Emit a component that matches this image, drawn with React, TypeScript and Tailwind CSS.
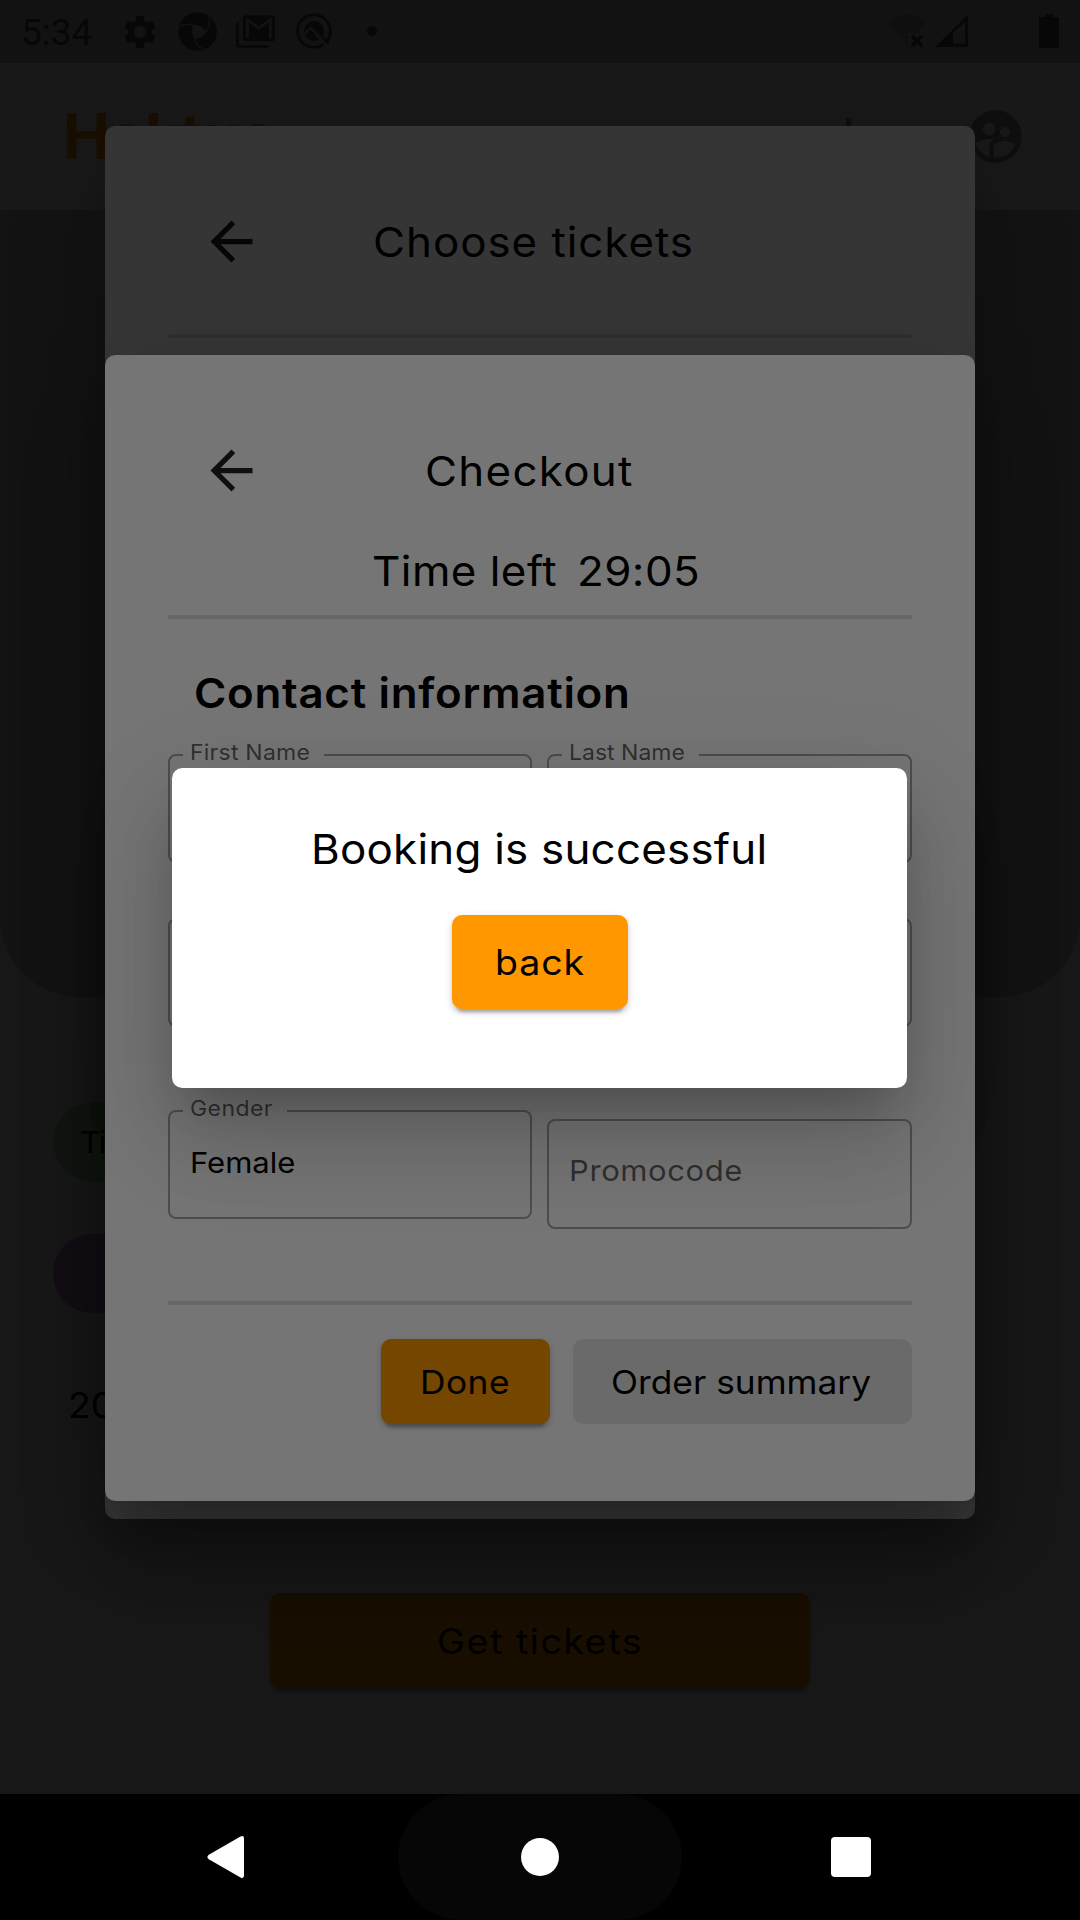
import type { ReactNode } from "react";
import { MdAdd, MdArrowBack, MdSettings, MdSupervisedUserCircle } from "react-icons/md";

const dialogShadow =
  "shadow-[0_29px_39px_-18px_rgba(0,0,0,0.19),0_58px_92px_2px_rgba(0,0,0,0.13),0_24px_100px_12px_rgba(0,0,0,0.09)]";
const buttonShadow =
  "shadow-[0_8px_3px_-5px_rgba(0,0,0,0.2),0_4px_5px_0_rgba(0,0,0,0.14),0_2px_10px_0_rgba(0,0,0,0.10)]";

/* Text drawn slightly wider than the base face. */
function Wide({ className = "", children }: { className?: string; children: ReactNode }) {
  return <span className={`inline-block origin-left scale-x-[1.07] whitespace-nowrap ${className}`}>{children}</span>;
}

function StatusBar() {
  return (
    <div className="flex h-[63px] items-start bg-[#c4c4c4] text-[#4c4c4c]">
      <span className="ml-[21px] mt-[14px] w-[99px] font-[Roboto] text-[37px] leading-[37px]">5:34</span>
      <MdSettings className="mt-[12px] size-[40px] shrink-0" />
      <svg className="ml-[18px] mt-[12px] size-[39px] shrink-0" viewBox="0 0 117 117">
        <circle cx="58.5" cy="58.5" r="58" fill="currentColor" />
        <g stroke="#c4c4c4" strokeWidth="4" fill="none">
          <path d="M0 48C14 36 30 35 45 40" />
          <path d="M90 2C98 22 94 44 85 59" />
          <path d="M48 82C54 98 66 108 82 114" />
        </g>
        <path d="M45 39C60 38 76 45 86 59C78 72 64 80 48 82C41 68 40 53 45 39Z" fill="#c4c4c4" />
      </svg>
      <svg className="ml-[19px] mt-[15px] h-[33px] w-[39px] shrink-0" viewBox="0 0 118 99">
        <path d="M4 22V86Q4 95 13 95H99" fill="none" stroke="currentColor" strokeWidth="8" />
        <rect x="21" y="0" width="97" height="79" rx="8" fill="currentColor" />
        <path d="M35 69V14L69 39L104 14V69" fill="none" stroke="#c4c4c4" strokeWidth="8" />
      </svg>
      <svg className="ml-[21px] mt-[13px] size-[36px] shrink-0" viewBox="0 0 108 108">
        <circle cx="54" cy="54" r="49" fill="none" stroke="currentColor" strokeWidth="9" />
        <circle cx="54" cy="54" r="30" fill="currentColor" />
        <path d="M58 62L92 98" fill="none" stroke="#c4c4c4" strokeWidth="8" />
        <path d="M45 39L98 92" fill="none" stroke="currentColor" strokeWidth="9" />
        <path d="M26 62L44 44L80 82" fill="none" stroke="#c4c4c4" strokeWidth="7" />
      </svg>
      <span className="ml-[35px] mt-[26px] size-[10px] rounded-full bg-[#4c4c4c]" />
      <svg className="ml-auto mt-[14px] h-[34px] w-[40px] shrink-0" viewBox="0 0 40 34">
        <path d="M0 9Q19.500 -9 39 9L30 19H21V33Z" fill="#a4a4a4" />
        <path d="M25 22L35 32M35 22L25 32" stroke="currentColor" strokeWidth="3.800" />
      </svg>
      <svg className="ml-[8px] mt-[14px] h-[34px] w-[34px] shrink-0" viewBox="0 0 34 34">
        <path d="M0 33L33 0.500V33ZM18 29.500H30V8L18 19Z" fill="currentColor" fillRule="evenodd" />
      </svg>
      <svg className="ml-[70px] mr-[21px] mt-[14px] h-[34px] w-[20px] shrink-0" viewBox="0 0 20 34">
        <path d="M6 0H14V3H18.500Q20 3 20 4.500V32Q20 34 18 34H2Q0 34 0 32V4.500Q0 3 1.500 3H6Z" fill="currentColor" />
      </svg>
    </div>
  );
}

function EventPage() {
  return (
    <div className="flex h-[1794px] flex-col bg-[#f8f8f8]">
      <StatusBar />
      <header className="flex h-[147px] items-start bg-white">
        <span className="ml-[63px] mt-[41px] text-[63px] font-bold leading-[64px] tracking-[-1px] text-[#ff9800]">Haktus</span>
        <MdAdd className="ml-auto mt-[42px] size-[63px] text-[#999]" />
        <MdSupervisedUserCircle className="ml-[84px] mr-[53px] mt-[42px] size-[63px] text-[#999]" />
      </header>
      <div className="h-[787px] shrink-0 rounded-b-[79px] bg-[#c8c8c8]" />
      <div className="ml-[53px] mt-[105px] flex h-[80px] w-[300px] shrink-0 items-center rounded-full bg-[#b0e0a8] pl-[27px] text-[30px]">
        <Wide className="tracking-[-2px]">Time</Wide>
      </div>
      <div className="ml-[53px] mt-[52px] h-[79px] w-[300px] shrink-0 rounded-full bg-[#c494d0]" />
      <div className="ml-[68px] mt-[72px] h-[40px] text-[35px] leading-[40px]">
        <Wide>2022</Wide>
      </div>
      <div
        className={`ml-[270px] mt-[168px] flex h-[95px] w-[540px] shrink-0 items-center rounded-[10px] bg-[#ff9800] pl-[167px] pt-[1px] text-[35px] ${buttonShadow}`}
      >
        <Wide className="tracking-[1.500px]">Get tickets</Wide>
      </div>
    </div>
  );
}

function Scrim() {
  return <div className="absolute inset-x-0 top-0 h-[1794px] bg-black/54" />;
}

function Divider({ className }: { className: string }) {
  return <div className={`shrink-0 bg-black/12 ${className}`} />;
}

function Field({ label, notch, tracking, children }: { label: string; notch: string; tracking: string; children?: ReactNode }) {
  return (
    <fieldset className="h-[120px] w-full min-w-0 rounded-[8px] border-2 border-black/34">
      <legend className={`ml-[13px] h-[24px] pl-[6.500px] text-[21.500px] leading-[24px] text-black/60 ${notch} ${tracking}`}>
        <span className="relative -top-[3px] inline-block origin-left scale-x-[1.07] whitespace-nowrap">{label}</span>
      </legend>
      {children}
    </fieldset>
  );
}

function TicketsDialog() {
  return (
    <div className={`absolute left-[105px] top-[126px] h-[1393px] w-[870px] rounded-[10.500px] bg-white px-[63px] pt-[84px] ${dialogShadow}`}>
      <div className="flex h-[63px] items-center">
        <MdArrowBack className="ml-[32px] size-[63px] text-black/87" />
        <h2 className="ml-[110px] pt-[2px] text-[41px]">
          <Wide className="tracking-[0.900px]">Choose tickets</Wide>
        </h2>
      </div>
      <Divider className="mt-[61px] h-[4px]" />
    </div>
  );
}

function CheckoutDialog() {
  return (
    <div className={`absolute left-[105px] top-[355px] flex h-[1146px] w-[870px] flex-col rounded-[10.500px] bg-white px-[63px] pt-[84px] ${dialogShadow}`}>
      <div className="flex h-[63px] shrink-0 items-center">
        <MdArrowBack className="ml-[32px] size-[63px] text-black/87" />
        <h2 className="ml-[162px] pt-[2px] text-[41px]">
          <Wide className="tracking-[1.200px]">Checkout</Wide>
        </h2>
      </div>
      <div className="mt-[45px] flex h-[50px] shrink-0 items-center pl-[204px] text-[41px]">
        <span className="w-[205px]">
          <Wide className="tracking-[0.460px]">Time left</Wide>
        </span>
        <Wide className="tracking-[0.400px]">29:05</Wide>
      </div>
      <Divider className="mt-[18px] h-[4px]" />
      <h3 className="mt-[49px] h-[50px] shrink-0 pl-[26px] text-[41px] font-[620] leading-[50px]">
        <Wide className="tracking-[0.670px]">Contact information</Wide>
      </h3>
      <div className="mt-[25px] grid shrink-0 grid-cols-[364px_365px] gap-[15px]">
        <Field label="First Name" notch="w-[141px]" tracking="tracking-[0.220px]" />
        <Field label="Last Name" notch="w-[137px]" tracking="tracking-normal" />
      </div>
      <div className="mt-[55px] grid shrink-0 grid-cols-[364px_365px] gap-[15px]">
        <div className="h-[109px] rounded-[8px] border-2 border-black/34" />
        <div className="h-[109px] rounded-[8px] border-2 border-black/34" />
      </div>
      <div className="mt-[72px] grid h-[130px] shrink-0 grid-cols-[364px_365px] items-start gap-[15px]">
        <Field label="Gender" notch="w-[104px]" tracking="tracking-[0.380px]">
          <div className="mt-[22px] pl-[20px] text-[29px] leading-[36px]">
            <Wide>Female</Wide>
          </div>
        </Field>
        <div className="mt-[20px] flex h-[110px] items-center rounded-[8px] border-2 border-black/34 pb-[6px] pl-[20px] text-[29px] text-black/60">
          <Wide className="tracking-[0.540px]">Promocode</Wide>
        </div>
      </div>
      <Divider className="mt-[72px] h-[4px]" />
      <div className="mt-[34px] flex h-[85px] shrink-0 justify-end gap-[23px] text-[33px]">
        <button className={`flex w-[169px] items-center rounded-[10px] bg-[#ff9800] pl-[39px] pt-[2px] ${buttonShadow}`}>
          <Wide className="tracking-[0.450px]">Done</Wide>
        </button>
        <button className="flex w-[339px] items-center rounded-[10px] bg-black/9 pl-[38px] pt-[2px]">
          <Wide>Order summary</Wide>
        </button>
      </div>
    </div>
  );
}

function SuccessDialog() {
  return (
    <div className={`absolute left-[172px] top-[768px] flex h-[320px] w-[735px] flex-col rounded-[10.500px] bg-white ${dialogShadow}`}>
      <p className="mt-[56px] h-[50px] pl-[139px] text-[41px] leading-[50px]">
        <Wide className="tracking-[0.230px]">Booking is successful</Wide>
      </p>
      <button className={`ml-[280px] mt-[41px] flex h-[94px] w-[176px] items-center rounded-[10px] bg-[#ff9800] pl-[43px] text-[35px] ${buttonShadow}`}>
        <Wide className="tracking-[0.870px]">back</Wide>
      </button>
    </div>
  );
}

function NavigationBar() {
  return (
    <nav className="relative flex h-[126px] items-center bg-black text-white">
      <svg className="ml-[207px] h-[42px] w-[37px]" viewBox="0 0 37 42">
        <path d="M33.500 0.600Q37 -1 37 2.500V39.500Q37 43 33.500 41.400L1.800 23.300Q-1 21 1.800 18.700Z" fill="currentColor" />
      </svg>
      <div className="ml-[154px] flex h-[126px] w-[284px] items-center justify-center rounded-full bg-[#060606]">
        <span className="size-[38px] rounded-full bg-white" />
      </div>
      <span className="ml-[149px] size-[40px] rounded-[4px] bg-white" />
    </nav>
  );
}

export default function App() {
  return (
    <div className="relative h-[1920px] w-[1080px] overflow-hidden bg-black font-[Inter,sans-serif] font-[370] text-black">
      <EventPage />
      <Scrim />
      <TicketsDialog />
      <Scrim />
      <CheckoutDialog />
      <Scrim />
      <SuccessDialog />
      <NavigationBar />
    </div>
  );
}
